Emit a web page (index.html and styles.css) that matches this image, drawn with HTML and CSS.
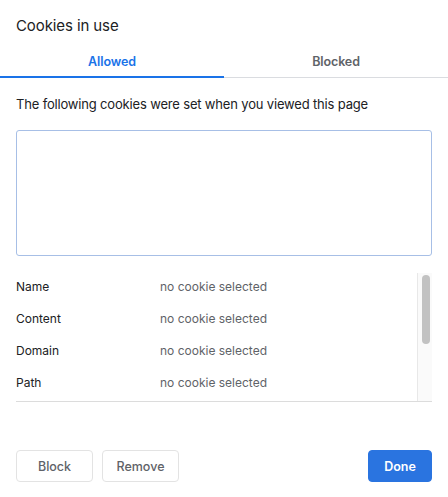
FILE: index.html
```html
<!DOCTYPE html>
<html>
<head>
<meta charset="utf-8">
<link rel="stylesheet" href="styles.css">
</head>
<body>
<div class="dialog">
  <h1 class="title">Cookies in use</h1>
  <div class="tabs">
    <div class="tab active">Allowed</div>
    <div class="tab">Blocked</div>
  </div>
  <div class="content">
    <p class="desc">The following cookies were set when you viewed this page</p>
    <div class="tree"></div>
    <div class="details">
      <div class="rows">
        <div class="row"><span class="label">Name</span><span class="value">no cookie selected</span></div>
        <div class="row"><span class="label">Content</span><span class="value">no cookie selected</span></div>
        <div class="row"><span class="label">Domain</span><span class="value">no cookie selected</span></div>
        <div class="row"><span class="label">Path</span><span class="value">no cookie selected</span></div>
      </div>
      <div class="track"><div class="thumb"></div></div>
    </div>
  </div>
  <div class="buttons">
    <button class="btn">Block</button>
    <button class="btn">Remove</button>
    <span class="spacer"></span>
    <button class="btn primary">Done</button>
  </div>
</div>
</body>
</html>
```
FILE: styles.css
```css
html, body {
  margin: 0;
  padding: 0;
  background: #ffffff;
}
body {
  font-family: "Inter", "Roboto", "Liberation Sans", sans-serif;
  color: #202124;
  -webkit-font-smoothing: antialiased;
}
.dialog {
  width: 448px;
  height: 497px;
  box-sizing: border-box;
  display: flex;
  flex-direction: column;
  background: #fff;
}
.title {
  margin: 0;
  padding: 16px 16px 0 16px;
  font-size: 15px;
  line-height: 20px;
  font-weight: 400;
  color: #202124;
  letter-spacing: -0.1px;
}
.tabs {
  display: flex;
  margin-top: 10px;
  border-bottom: 1px solid #dadce0;
}
.tab {
  flex: 1;
  text-align: center;
  font-size: 12.5px;
  font-weight: 600;
  color: #5f6368;
  height: 30px;
  line-height: 31px;
  border-bottom: 2px solid transparent;
  margin-bottom: -1px;
  letter-spacing: -0.1px;
}
.tab.active {
  color: #1a73e8;
  border-bottom-color: #1a73e8;
}
.content {
  padding: 0 16px;
  display: flex;
  flex-direction: column;
}
.desc {
  margin: 16px 0 0 0;
  font-size: 13px;
  line-height: 20px;
  color: #202124;
  letter-spacing: -0.17px;
}
.tree {
  margin-top: 16px;
  height: 124px;
  border: 1px solid #a7bfe6;
  border-radius: 3px;
}
.details {
  margin-top: 17px;
  display: flex;
  border-bottom: 1px solid #dcdcdc;
  height: 128px;
}
.rows {
  flex: 1;
}
.row {
  display: flex;
  height: 32px;
  box-sizing: border-box;
  padding-bottom: 5px;
  align-items: center;
  font-size: 12px;
}
.label {
  width: 144px;
  color: #202124;
}
.value {
  color: #5f6368;
}
.track {
  width: 15px;
  box-sizing: border-box;
  border-left: 1px solid #e8e8e8;
  background: #fafafa;
  padding: 2px 3px 0 4px;
}
.thumb {
  width: 8px;
  height: 69px;
  border-radius: 4px;
  background: #c2c2c2;
}
.buttons {
  display: flex;
  align-items: center;
  padding: 0 16px;
  margin-top: 48px;
  gap: 9px;
}
.spacer {
  flex: 1;
}
.btn {
  font-family: inherit;
  height: 32px;
  width: 77px;
  box-sizing: border-box;
  border: 1px solid #e3e3e3;
  border-radius: 4px;
  background: #fff;
  color: #5f6368;
  font-size: 12.5px;
  font-weight: 500;
  padding: 0;
}
.btn.primary {
  width: 64px;
  background: #2a74e0;
  border-color: #2a74e0;
  color: #fff;
  font-weight: 600;
}
```
